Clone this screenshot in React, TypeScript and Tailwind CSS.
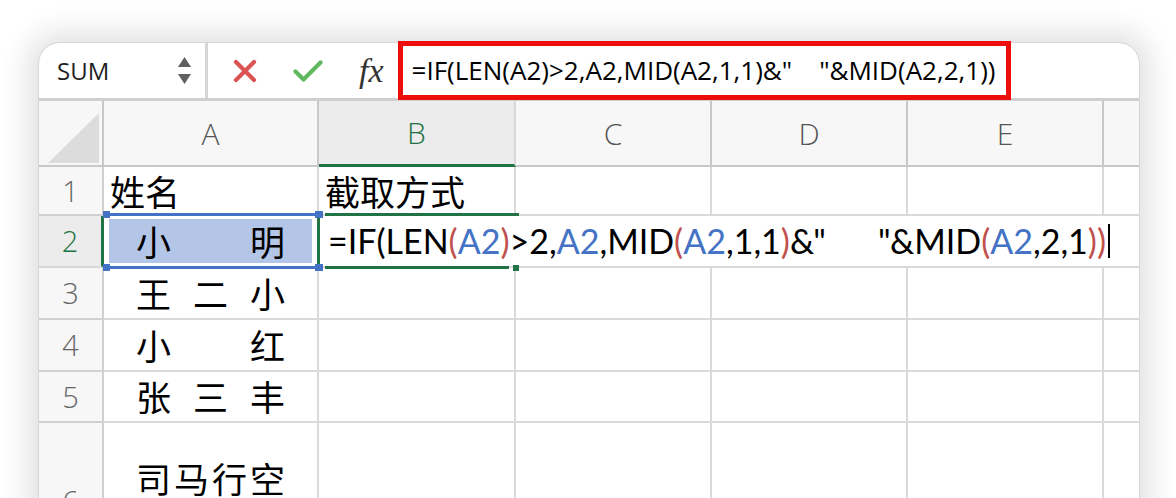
import type { ReactNode } from "react";

const GREEN = "#217346";
const BLUE = "#4472c4";

const cols = ["A", "B", "C", "D", "E", ""];

type Seg = { t: string; c?: "r" | "b" };

const formula: Seg[] = [
  { t: "=IF(LEN" },
  { t: "(", c: "r" },
  { t: "A2", c: "b" },
  { t: ")", c: "r" },
  { t: ">2," },
  { t: "A2", c: "b" },
  { t: ",MID" },
  { t: "(", c: "r" },
  { t: "A2", c: "b" },
  { t: ",1,1" },
  { t: ")", c: "r" },
  { t: '&"      "&MID' },
  { t: "(", c: "r" },
  { t: "A2", c: "b" },
  { t: ",2,1" },
  { t: "))", c: "r" },
];

function Spread({ chars }: { chars: string[] }) {
  return (
    <div className="flex h-full items-center justify-between px-[32px]">
      {chars.map((ch, i) => (
        <span key={i}>{ch}</span>
      ))}
    </div>
  );
}

function Cell({
  children,
  className = "",
}: {
  children?: ReactNode;
  className?: string;
}) {
  return (
    <div
      className={`min-w-0 border-r-2 border-b-2 border-[#d9d9d9] ${className}`}
    >
      {children}
    </div>
  );
}

function RowHead({ n, active = false }: { n: string; active?: boolean }) {
  return (
    <div
      className={`flex items-center justify-center border-b-2 font-['Open_Sans',sans-serif] text-[29px] font-light ${
        active
          ? "border-r-[3px] border-b-[#d9d9d9] border-r-[#217346] bg-[#ececec] text-[#217346]"
          : "border-r-2 border-[#d0d0d0] bg-[#f7f7f7] text-[#666]"
      }`}
    >
      {n}
    </div>
  );
}

// C, D, E and the cut-off column at the right edge
function RestCells() {
  return (
    <>
      <Cell />
      <Cell />
      <Cell />
      <Cell />
    </>
  );
}

export default function App() {
  return (
    <div className="relative h-[498px] w-[1176px] overflow-hidden bg-white pl-[38px] pt-[42px] font-['Open_Sans','Noto_Sans_CJK_SC',sans-serif]">
      <div className="h-[520px] w-[1102px] overflow-hidden rounded-tl-[22px] rounded-tr-[22px] border border-[#d6d6d6] bg-white shadow-[0_0_30px_10px_rgba(0,0,0,0.12)]">
        {/* formula bar */}
        <div className="flex h-[58px] items-center border-b-[3px] border-[#cfcfcf]">
          <div className="flex h-full w-[169px] items-center justify-between border-r-[3px] border-[#d6d6d6] pl-[18px] pr-[14px]">
            <span className="text-[24px] text-[#1f1f1f]">SUM</span>
            <div className="flex flex-col items-center gap-[7px]">
              <svg width="13" height="10" viewBox="0 0 13 10">
                <path d="M6.5 0L13 10H0Z" fill="#5f5f5f" />
              </svg>
              <svg width="13" height="10" viewBox="0 0 13 10">
                <path d="M0 0H13L6.5 10Z" fill="#5f5f5f" />
              </svg>
            </div>
          </div>
          <div className="flex h-full items-center gap-[36px] pl-[25px]">
            <svg width="24" height="24" viewBox="0 0 24 24">
              <path
                d="M3 3L21 21M21 3L3 21"
                stroke="#dc5353"
                strokeWidth="4.2"
                strokeLinecap="round"
              />
            </svg>
            <svg width="30" height="24" viewBox="0 0 30 24">
              <path
                d="M2.5 12.5L10.5 20.5L27.5 3.5"
                stroke="#62b761"
                strokeWidth="4.2"
                strokeLinecap="round"
                strokeLinejoin="round"
                fill="none"
              />
            </svg>
            <span className="font-['Liberation_Serif',serif] text-[34px] italic leading-none text-[#333]">
              fx
            </span>
          </div>
          <div className="ml-[28px] whitespace-pre text-[26px] text-black">
            {'=IF(LEN(A2)>2,A2,MID(A2,1,1)&"    "&MID(A2,2,1))'}
          </div>
        </div>

        {/* sheet */}
        <div className="relative grid grid-cols-[65px_215px_197px_196px_196px_196px_37px] grid-rows-[66px_49px_52px_52px_52px_51px_158px] font-['Noto_Sans_CJK_SC',sans-serif] text-[35px] text-black">
          <div className="relative border-r-2 border-b-2 border-[#c8c8c8] bg-[#f7f7f7]">
            <svg
              className="absolute left-[9px] top-[12px]"
              width="51"
              height="50"
              viewBox="0 0 51 50"
            >
              <path d="M51 0V50H0Z" fill="#dcdcdc" />
            </svg>
          </div>
          {cols.map((c) => (
            <div
              key={c || "f"}
              className={`flex items-center justify-center font-['Open_Sans',sans-serif] text-[30px] font-light ${
                c === "B"
                  ? "border-b-[3px] border-r-2 border-b-[#217346] border-r-[#d9d9d9] bg-[#ececec] text-[#217346]"
                  : "border-r-2 border-b-2 border-[#c8c8c8] bg-[#f7f7f7] text-[#555]"
              }`}
            >
              {c}
            </div>
          ))}

          {/* row 1 */}
          <RowHead n="1" />
          <Cell className="flex items-center pl-[6px] leading-none">姓名</Cell>
          <Cell className="flex items-center pl-[6px] leading-none">
            截取方式
          </Cell>
          <RestCells />

          {/* row 2 */}
          <RowHead n="2" active />
          <Cell className="bg-white px-[5px] pb-[3px] pt-[3px]">
            <div className="h-full bg-[#b4c6e7]">
              <div className="flex h-full items-center justify-between px-[27px]">
                <span>小</span>
                <span>明</span>
              </div>
            </div>
          </Cell>
          <div className="relative col-span-5 flex items-center border-b-2 border-[#d9d9d9] pl-[9px] font-['Lato',sans-serif] text-[34px] leading-none">
            <span className="whitespace-pre">
              {formula.map((s, i) => (
                <span
                  key={i}
                  className={
                    s.c === "r"
                      ? "text-[#c0504d]"
                      : s.c === "b"
                        ? "text-[#4472c4]"
                        : "text-black"
                  }
                >
                  {s.t}
                </span>
              ))}
            </span>
            <span className="ml-[2px] h-[34px] w-[2px] bg-black" />
          </div>

          {/* row 3 */}
          <RowHead n="3" />
          <Cell>
            <Spread chars={["王", "二", "小"]} />
          </Cell>
          <Cell />
          <RestCells />

          {/* row 4 */}
          <RowHead n="4" />
          <Cell>
            <Spread chars={["小", "红"]} />
          </Cell>
          <Cell />
          <RestCells />

          {/* row 5 */}
          <RowHead n="5" />
          <Cell>
            <Spread chars={["张", "三", "丰"]} />
          </Cell>
          <Cell />
          <RestCells />

          {/* row 6 */}
          <RowHead n="6" />
          <Cell className="pt-[33px]">
            <div className="flex h-[44px] items-center justify-between px-[32px]">
              {["司", "马", "行", "空"].map((ch, i) => (
                <span key={i}>{ch}</span>
              ))}
            </div>
          </Cell>
          <Cell />
          <RestCells />

          {/* reference highlight on A2 */}
          <div
            className="absolute left-[68px] top-[112px] h-[3px] w-[212px]"
            style={{ background: BLUE }}
          />
          <div
            className="absolute left-[68px] top-[165px] h-[3px] w-[212px]"
            style={{ background: BLUE }}
          />
          <div className="absolute left-[64px] top-[110px] h-[7px] w-[7px] bg-[#4472c4]" />
          <div className="absolute left-[276px] top-[110px] h-[7px] w-[8px] bg-[#4472c4]" />
          <div className="absolute left-[64px] top-[163px] h-[7px] w-[7px] bg-[#4472c4]" />
          <div className="absolute left-[276px] top-[163px] h-[7px] w-[8px] bg-[#4472c4]" />

          {/* active cell B2 */}
          <div
            className="absolute left-[278px] top-[117px] h-[46px] w-[3px]"
            style={{ background: GREEN }}
          />
          <div
            className="absolute left-[286px] top-[112px] h-[3px] w-[194px]"
            style={{ background: GREEN }}
          />
          <div
            className="absolute left-[286px] top-[165px] h-[3px] w-[184px]"
            style={{ background: GREEN }}
          />
          <div className="absolute left-[474px] top-[164px] h-[6px] w-[6px] bg-[#217346]" />
        </div>
      </div>

      {/* red annotation box */}
      <div className="absolute left-[398px] top-[41px] h-[59px] w-[613px] border-[5px] border-[#ee0d0d]" />
    </div>
  );
}
